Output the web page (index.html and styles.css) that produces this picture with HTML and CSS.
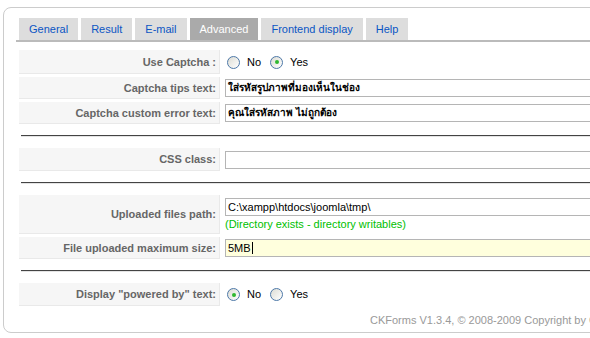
FILE: index.html
```html
<!DOCTYPE html>
<html>
<head>
<meta charset="utf-8">
<link rel="stylesheet" href="styles.css">
</head>
<body>
<div class="box">
  <ul class="tabs">
    <li class="tab">General</li>
    <li class="tab">Result</li>
    <li class="tab">E-mail</li>
    <li class="tab active">Advanced</li>
    <li class="tab">Frontend display</li>
    <li class="tab">Help</li>
  </ul>
  <table class="admintable">
    <tr class="r24">
      <td class="key">Use Captcha :</td>
      <td class="val"><span class="radio"></span><span class="rl">No</span><span class="radio on"></span><span class="rl">Yes</span></td>
    </tr>
    <tr class="r22">
      <td class="key">Captcha tips text:</td>
      <td class="val"><div class="input thai">ใส่รหัสรูปภาพที่มองเห็นในช่อง</div></td>
    </tr>
    <tr class="r22">
      <td class="key">Captcha custom error text:</td>
      <td class="val"><div class="input thai">คุณใส่รหัสภาพ ไม่ถูกต้อง</div></td>
    </tr>
    <tr class="sep"><td colspan="2"><div class="hr"></div></td></tr>
    <tr class="r23">
      <td class="key">CSS class:</td>
      <td class="val"><div class="input"></div></td>
    </tr>
    <tr class="sep"><td colspan="2"><div class="hr"></div></td></tr>
    <tr class="r36">
      <td class="key">Uploaded files path:</td>
      <td class="val"><div class="input">C:\xampp\htdocs\joomla\tmp\</div><div class="ok">(Directory exists - directory writables)</div></td>
    </tr>
    <tr class="r22">
      <td class="key">File uploaded maximum size:</td>
      <td class="val"><div class="input focus">5MB<span class="caret"></span></div></td>
    </tr>
    <tr class="sep"><td colspan="2"><div class="hr"></div></td></tr>
    <tr class="r23">
      <td class="key">Display "powered by" text:</td>
      <td class="val"><span class="radio on"></span><span class="rl">No</span><span class="radio"></span><span class="rl">Yes</span></td>
    </tr>
  </table>
  <div class="footer">CKForms V1.3.4, © 2008-2009 Copyright by Cookex</div>
</div>
</body>
</html>
```

FILE: styles.css
```css
html, body {
  margin: 0;
  padding: 0;
  background: #fff;
  overflow: hidden;
  width: 590px;
  height: 338px;
}
body {
  font-family: "Liberation Sans", Arial, sans-serif;
  font-size: 11px;
  color: #333;
}
.box {
  margin: 7px 0 0 3px;
  width: 700px;
  height: 326px;
  border: 1px solid #ccc;
  border-radius: 8px;
  box-sizing: border-box;
  padding: 10px 0 0 12px;
}
.tabs {
  list-style: none;
  margin: 0;
  padding: 0 0 0 3px;
  display: flex;
  gap: 3px;
  border-bottom: 2px solid #bbb;
  height: 22px;
}
.tab {
  background: #ddd;
  color: #0b55c4;
  padding: 0 10px;
  height: 22px;
  line-height: 23px;
  white-space: nowrap;
}
.tab.active {
  background: #aaa;
  color: #fff;
}
.admintable {
  border-collapse: separate;
  border-spacing: 3px;
  margin-top: 5px;
  width: 680px;
}
.admintable td {
  padding: 0;
}
.key {
  width: 201px;
  background: #f6f6f6;
  border-right: 1px solid #e9e9e9;
  border-bottom: 1px solid #e9e9e9;
  text-align: right;
  font-weight: bold;
  color: #666;
  padding-right: 3px !important;
  box-sizing: border-box;
  font-size: 11px;
}
.r24 td { height: 24px; }
.r22 td { height: 22px; }
.r23 td { height: 23px; }
.r36 td { height: 36px; }
.sep td { height: 18px; }
.val {
  padding-left: 2px !important;
  vertical-align: middle;
}
.r36 .val { vertical-align: top; padding-top: 3px !important; }
.hr {
  margin-left: 2px;
  border-top: 1px solid #444;
  border-bottom: 1px solid #e4e4e4;
  height: 0;
}
.input {
  height: 18px;
  box-sizing: border-box;
  border: 1px solid #b5b5b5;
  background: #fff;
  color: #000;
  font-size: 11px;
  line-height: 16px;
  padding-left: 2px;
  white-space: nowrap;
  overflow: hidden;
}
.input.thai {
  font-size: 10px;
  font-weight: bold;
}
.input.focus {
  background: #ffffdd;
}
.caret {
  display: inline-block;
  width: 1px;
  height: 12px;
  background: #000;
  vertical-align: -2px;
  margin-left: 1px;
}
.ok {
  color: #00c000;
  font-size: 11px;
  margin-top: 2px;
}
.radio {
  display: inline-block;
  width: 13px;
  height: 13px;
  border: 1px solid #4d78a8;
  border-radius: 50%;
  background: linear-gradient(135deg, #dcdcd4, #ffffff);
  vertical-align: -3px;
  margin-left: 2px;
  position: relative;
  box-sizing: border-box;
}
.radio.on::after {
  content: "";
  position: absolute;
  left: 3.5px;
  top: 3.5px;
  width: 4px;
  height: 4px;
  border-radius: 50%;
  background: #2fb82f;
}
.rl {
  color: #000;
  font-size: 11px;
  margin: 0 7px 0 7px;
}
.footer {
  margin: 5px 0 0 354px;
  color: #999;
  white-space: nowrap;
}
```
